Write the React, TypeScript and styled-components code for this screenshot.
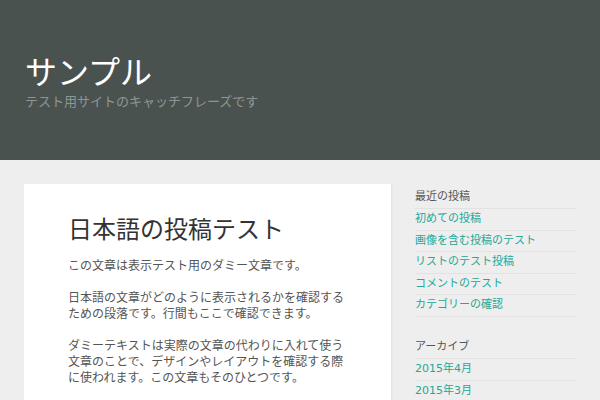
import React from "react";
import styled, { createGlobalStyle } from "styled-components";

const GlobalStyle = createGlobalStyle`
  body {
    margin: 0;
    background: #eeeeee;
    font-family: "DejaVu Sans", "Noto Sans CJK JP", sans-serif;
  }
`;

const Header = styled.header`
  height: 160px;
  box-sizing: border-box;
  background: #4a5250;
  padding: 53px 25px 0;
`;

const SiteTitle = styled.h1`
  margin: 0;
  font-size: 32px;
  line-height: 40px;
  font-weight: normal;
  color: #ffffff;
`;

const Tagline = styled.p`
  margin: 1px 0 0;
  font-size: 13px;
  line-height: 16px;
  color: #8e9695;
`;

const Main = styled.div`
  display: flex;
  align-items: flex-start;
  gap: 24px;
  padding: 24px 24px 0;
`;

const Article = styled.article`
  width: 367px;
  box-sizing: border-box;
  background: #ffffff;
  padding: 30px 44px 20px;
  box-shadow: 1px 1px 2px rgba(0, 0, 0, 0.06);
  min-height: 240px;
`;

const PostTitle = styled.h2`
  margin: 0 0 12px;
  font-size: 24px;
  line-height: 32px;
  font-weight: normal;
  color: #333333;
`;

const Paragraph = styled.p`
  margin: 0 0 16px;
  font-size: 12px;
  line-height: 16px;
  color: #555555;
`;

const Sidebar = styled.aside`
  width: 161px;
  padding-top: 5px;
`;

const Widget = styled.section`
  margin-bottom: 22px;
`;

const WidgetTitle = styled.h3`
  margin: 0;
  padding-bottom: 3px;
  font-size: 11px;
  line-height: 16px;
  font-weight: normal;
  color: #555555;
  border-bottom: 1px solid #e2e2e2;
`;

const LinkList = styled.ul`
  list-style: none;
  margin: 0;
  padding: 0;
`;

const LinkItem = styled.li`
  padding: 3px 0;
  font-size: 11px;
  line-height: 14.6px;
  border-bottom: 1px solid #e2e2e2;
`;

const SideLink = styled.a`
  color: #22a898;
  text-decoration: none;
`;

const recentPosts = [
  "初めての投稿",
  "画像を含む投稿のテスト",
  "リストのテスト投稿",
  "コメントのテスト",
  "カテゴリーの確認",
];

const archives = ["2015年4月", "2015年3月"];

const App = () => {
  return (
    <>
      <GlobalStyle />
      <Header>
        <SiteTitle>サンプル</SiteTitle>
        <Tagline>テスト用サイトのキャッチフレーズです</Tagline>
      </Header>
      <Main>
        <Article>
          <PostTitle>日本語の投稿テスト</PostTitle>
          <Paragraph>この文章は表示テスト用のダミー文章です。</Paragraph>
          <Paragraph>
            日本語の文章がどのように表示されるかを確認するための段落です。行間もここで確認できます。
          </Paragraph>
          <Paragraph>
            ダミーテキストは実際の文章の代わりに入れて使う文章のことで、デザインやレイアウトを確認する際に使われます。この文章もそのひとつです。
          </Paragraph>
        </Article>
        <Sidebar>
          <Widget>
            <WidgetTitle>最近の投稿</WidgetTitle>
            <LinkList>
              {recentPosts.map((title) => (
                <LinkItem key={title}>
                  <SideLink href="#">{title}</SideLink>
                </LinkItem>
              ))}
            </LinkList>
          </Widget>
          <Widget>
            <WidgetTitle>アーカイブ</WidgetTitle>
            <LinkList>
              {archives.map((month) => (
                <LinkItem key={month}>
                  <SideLink href="#">{month}</SideLink>
                </LinkItem>
              ))}
            </LinkList>
          </Widget>
        </Sidebar>
      </Main>
    </>
  );
};

export default App;
